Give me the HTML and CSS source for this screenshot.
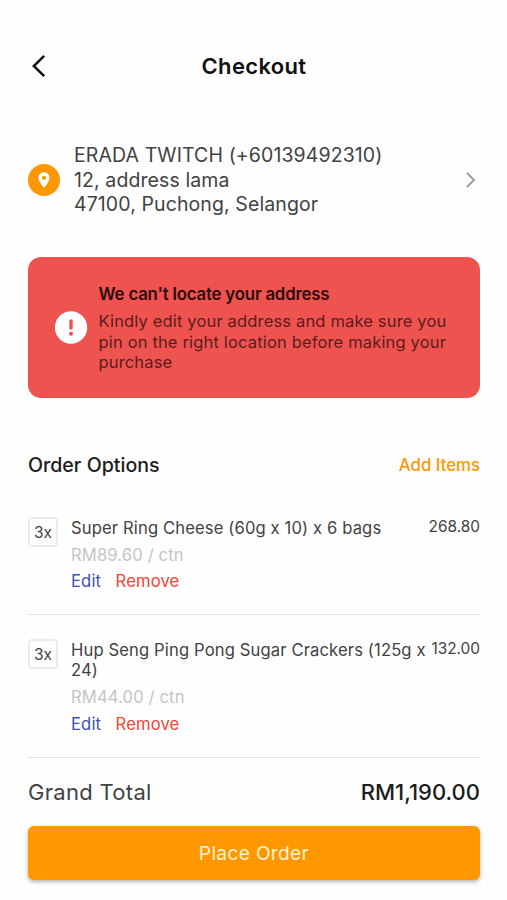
FILE: index.html
```
<!DOCTYPE html>
<html lang="en">
<head>
    <meta charset="UTF-8">
    <meta name="viewport" content="width=device-width, initial-scale=1.0">
    <title>Checkout</title>
    <link rel="stylesheet" href="styles.css">
</head>
<body>

    <header>
        <svg class="back" width="20" height="24" viewBox="0 0 20 24"><path d="M16.2 1.8 L5.8 12 L16.2 22.2"/></svg>
        <h1>Checkout</h1>
    </header>

    <!-- Delivery address -->
    <section class="address">
        <svg class="pin" width="32" height="32" viewBox="0 0 32 32">
            <circle cx="16" cy="16" r="16" fill="#ff9800"/>
            <path fill="#fff" fill-rule="evenodd" d="M16 8.3c-3.1 0-5.5 2.4-5.5 5.5 0 4 5.5 10 5.5 10s5.5-6 5.5-10c0-3.1-2.4-5.5-5.5-5.5zm0 7.6a2.1 2.1 0 1 1 0-4.2 2.1 2.1 0 0 1 0 4.2z"/>
        </svg>
        <div class="address-text">
            <div>ERADA TWITCH (+60139492310)</div>
            <div>12, address lama</div>
            <div>47100, Puchong, Selangor</div>
        </div>
        <svg class="next" width="12" height="18" viewBox="0 0 12 18"><path d="M2 2 L9 9 L2 16"/></svg>
    </section>

    <!-- Address warning -->
    <section class="alert">
        <svg width="33" height="33" viewBox="0 0 33 33">
            <circle cx="16" cy="16.5" r="16.2" fill="#fff"/>
            <path d="M16 10v7" stroke="#ef5350" stroke-width="3.4" stroke-linecap="round"/>
            <circle cx="16" cy="22.8" r="2" fill="#ef5350"/>
        </svg>
        <div class="alert-text">
            <h2>We can't locate your address</h2>
            <p>Kindly edit your address and make sure you pin on the right location before making your purchase</p>
        </div>
    </section>

    <div class="options">
        <h2>Order Options</h2>
        <a class="add">Add Items</a>
    </div>

    <!-- Order items -->
    <ul>
        <li>
            <span class="qty">3x</span>
            <div class="item">
                <div class="name">Super Ring Cheese (60g x 10) x 6 bags</div>
                <div class="unit">RM89.60 / ctn</div>
                <div class="actions"><a class="edit">Edit</a><a class="remove">Remove</a></div>
            </div>
            <span class="price">268.80</span>
        </li>
        <li>
            <span class="qty">3x</span>
            <div class="item">
                <div class="name">Hup Seng Ping Pong Sugar Crackers (125g x 24)</div>
                <div class="unit">RM44.00 / ctn</div>
                <div class="actions"><a class="edit">Edit</a><a class="remove">Remove</a></div>
            </div>
            <span class="price">132.00</span>
        </li>
    </ul>

    <footer>
        <div class="total">
            <span class="total-label">Grand Total</span>
            <span class="total-value">RM1,190.00</span>
        </div>
        <button>Place Order</button>
    </footer>

</body>
</html>
```

FILE: styles.css
```
* {
    box-sizing: border-box;
}
body {
    font-family: 'Inter', sans-serif;
    margin: 0;
    padding: 46px 27px 0 28px;
    height: 900px;
    background-color: #fefefe;
    color: #424242;
    overflow: hidden;
}
h1, h2, p, ul {
    margin: 0;
    padding: 0;
}
svg {
    flex: none;
}
header {
    display: grid;
    grid-template-columns: 20px 1fr 20px;
    align-items: center;
    height: 40px;
    text-align: center;
}
h1 {
    font-size: 22px;
    font-weight: 600;
    letter-spacing: 0.35px;
    color: #111;
}
.back, .next {
    fill: none;
    stroke: #111;
    stroke-width: 2.5;
}
.next {
    margin-right: 3px;
    stroke: #9e9e9e;
    stroke-width: 2;
}
.address {
    display: flex;
    align-items: center;
    height: 73px;
    margin-top: 57px;
}
.address-text {
    flex: 1;
    margin-left: 14px;
    padding-top: 1px;
    font-size: 19.5px;
    line-height: 24.4px;
    letter-spacing: 0.1px;
}
.alert {
    display: flex;
    align-items: center;
    height: 141px;
    margin-top: 41px;
    padding: 0 27px;
    gap: 10.5px;
    background-color: #ef5350;
    border-radius: 13px;
}
.alert-text {
    padding-top: 2px;
}
.alert h2 {
    font-size: 16.8px;
    font-weight: 600;
    line-height: 20px;
    letter-spacing: -0.18px;
    color: #2b0c0c;
}
.alert p {
    margin-top: 7px;
    font-size: 16.5px;
    line-height: 20.4px;
    letter-spacing: 0.16px;
    color: #5a1c1b;
}
.options {
    display: flex;
    justify-content: space-between;
    align-items: center;
    height: 30px;
    margin-top: 52px;
}
.options h2 {
    font-size: 19.6px;
    font-weight: 500;
    color: #1c1c1c;
}
.add {
    font-size: 16.8px;
    font-weight: 500;
    color: #ff9800;
}
ul {
    list-style-type: none;
    margin-top: 13px;
}
li {
    display: flex;
    padding: 24px 0;
    border-bottom: 1px solid #e4e4e4;
}
li:first-child {
    height: 122px;
}
li:last-child {
    height: 143px;
}
.qty {
    flex: none;
    width: 30px;
    height: 30px;
    border: 2px solid #ececec;
    border-radius: 4px;
    font-size: 15.5px;
    line-height: 27px;
    text-align: center;
}
.item {
    flex: 1;
    margin-left: 13px;
    padding-top: 1px;
    font-size: 16.6px;
    line-height: 20.2px;
    letter-spacing: 0.13px;
}
.unit {
    margin-top: 6.4px;
    color: #c4c4c4;
}
.actions {
    display: flex;
    gap: 14.5px;
    margin-top: 6.6px;
}
.edit {
    color: #3f51b5;
}
.remove {
    color: #f44336;
}
.price {
    margin-left: -8px;
    font-size: 15.4px;
    line-height: 20px;
}
.total {
    display: flex;
    justify-content: space-between;
    align-items: center;
    height: 68px;
}
.total-label {
    font-size: 22px;
    letter-spacing: 0.3px;
}
.total-value {
    font-size: 22px;
    font-weight: 500;
    color: #1c1c1c;
}
button {
    display: block;
    width: 100%;
    height: 54px;
    border: none;
    border-radius: 6px;
    background-color: #ff9800;
    box-shadow: 0 2px 4px rgba(0, 0, 0, 0.3);
    color: #fff3d0;
    font-family: inherit;
    font-size: 19.2px;
    letter-spacing: 0.3px;
}
```
